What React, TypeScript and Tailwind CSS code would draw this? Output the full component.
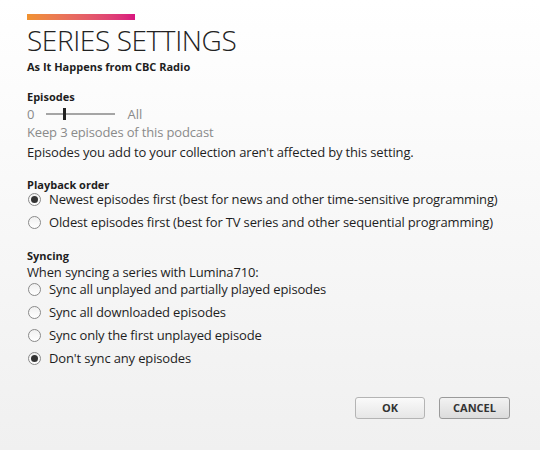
import React, { useState } from 'react';

const font = { fontFamily: '"Open Sans", "Noto Sans", sans-serif' };

interface RadioProps {
  checked: boolean;
  label: string;
  onSelect: () => void;
}

const Radio: React.FC<RadioProps> = ({ checked, label, onSelect }) => (
  <label className="flex items-center h-[23px] cursor-pointer" onClick={onSelect}>
    <span className="w-[13px] h-[13px] ml-[1px] rounded-full border border-[#8a8a8a] bg-gradient-to-b from-[#f0f0f0] to-[#ffffff] flex items-center justify-center shrink-0">
      {checked && <span className="w-[7px] h-[7px] rounded-full bg-[#333]" />}
    </span>
    <span className="ml-[8px] text-[13px] text-[#1e1e1e] leading-none tracking-[-0.15px]">{label}</span>
  </label>
);

const App: React.FC = () => {
  const [order, setOrder] = useState(0);
  const [sync, setSync] = useState(3);

  const syncOptions = [
    'Sync all unplayed and partially played episodes',
    'Sync all downloaded episodes',
    'Sync only the first unplayed episode',
    "Don't sync any episodes",
  ];

  return (
    <div
      className="w-[540px] h-[450px] bg-gradient-to-b from-[#ffffff] to-[#f0f0f0] text-[#1e1e1e] relative overflow-hidden"
      style={font}
    >
      <div className="pl-[27px] pt-[14px]">
        <div className="w-[108px] h-[6px] bg-gradient-to-r from-[#f0922f] to-[#d9137f]" />
        <h1 className="mt-[2px] text-[28px] font-light leading-[36px] text-[#222] tracking-[-0.4px]">SERIES SETTINGS</h1>
        <div className="mt-[2px] text-[11px] font-bold leading-[14px]">As It Happens from CBC Radio</div>

        <div className="mt-[16px] text-[11px] font-bold leading-[14px]">Episodes</div>
        <div className="mt-[3px] flex items-center h-[14px] text-[13px] leading-[14px] text-[#8a8a8a]">
          <span>0</span>
          <div className="relative ml-[12px] w-[69px] h-[12px] flex items-center">
            <div className="w-full h-[2px] bg-[#a5a5a5]" />
            <div className="absolute left-[17px] top-0 w-[3px] h-[12px] bg-[#222]" />
          </div>
          <span className="ml-[12px]">All</span>
        </div>
        <div className="mt-[2px] text-[13px] text-[#8a8a8a] leading-[18px] tracking-[-0.15px]">Keep 3 episodes of this podcast</div>
        <div className="mt-[2px] text-[13px] leading-[18px] tracking-[-0.15px]">Episodes you add to your collection aren't affected by this setting.</div>

        <div className="mt-[17px] text-[11px] font-bold leading-[14px]">Playback order</div>
        <div className="-mt-[4px] flex flex-col">
          <Radio
            checked={order === 0}
            label="Newest episodes first (best for news and other time-sensitive programming)"
            onSelect={() => setOrder(0)}
          />
          <Radio
            checked={order === 1}
            label="Oldest episodes first (best for TV series and other sequential programming)"
            onSelect={() => setOrder(1)}
          />
        </div>

        <div className="mt-[15px] text-[11px] font-bold leading-[14px]">Syncing</div>
        <div className="text-[13px] leading-[18px] tracking-[-0.15px]">When syncing a series with Lumina710:</div>
        <div className="-mt-[3px] flex flex-col">
          {syncOptions.map((opt, i) => (
            <Radio key={opt} checked={sync === i} label={opt} onSelect={() => setSync(i)} />
          ))}
        </div>
      </div>

      <div className="absolute right-[30px] top-[397px] flex gap-[14px]">
        <button className="w-[70px] h-[22px] rounded-[3px] border border-[#b4b4b4] bg-gradient-to-b from-[#fafafa] to-[#e6e6e6] text-[11px] font-bold text-[#333]">
          OK
        </button>
        <button className="w-[71px] h-[22px] rounded-[3px] border border-[#9a9a9a] bg-gradient-to-b from-[#f2f2f2] to-[#dcdcdc] text-[11px] font-bold text-[#333]">
          CANCEL
        </button>
      </div>
    </div>
  );
};

export default App;
